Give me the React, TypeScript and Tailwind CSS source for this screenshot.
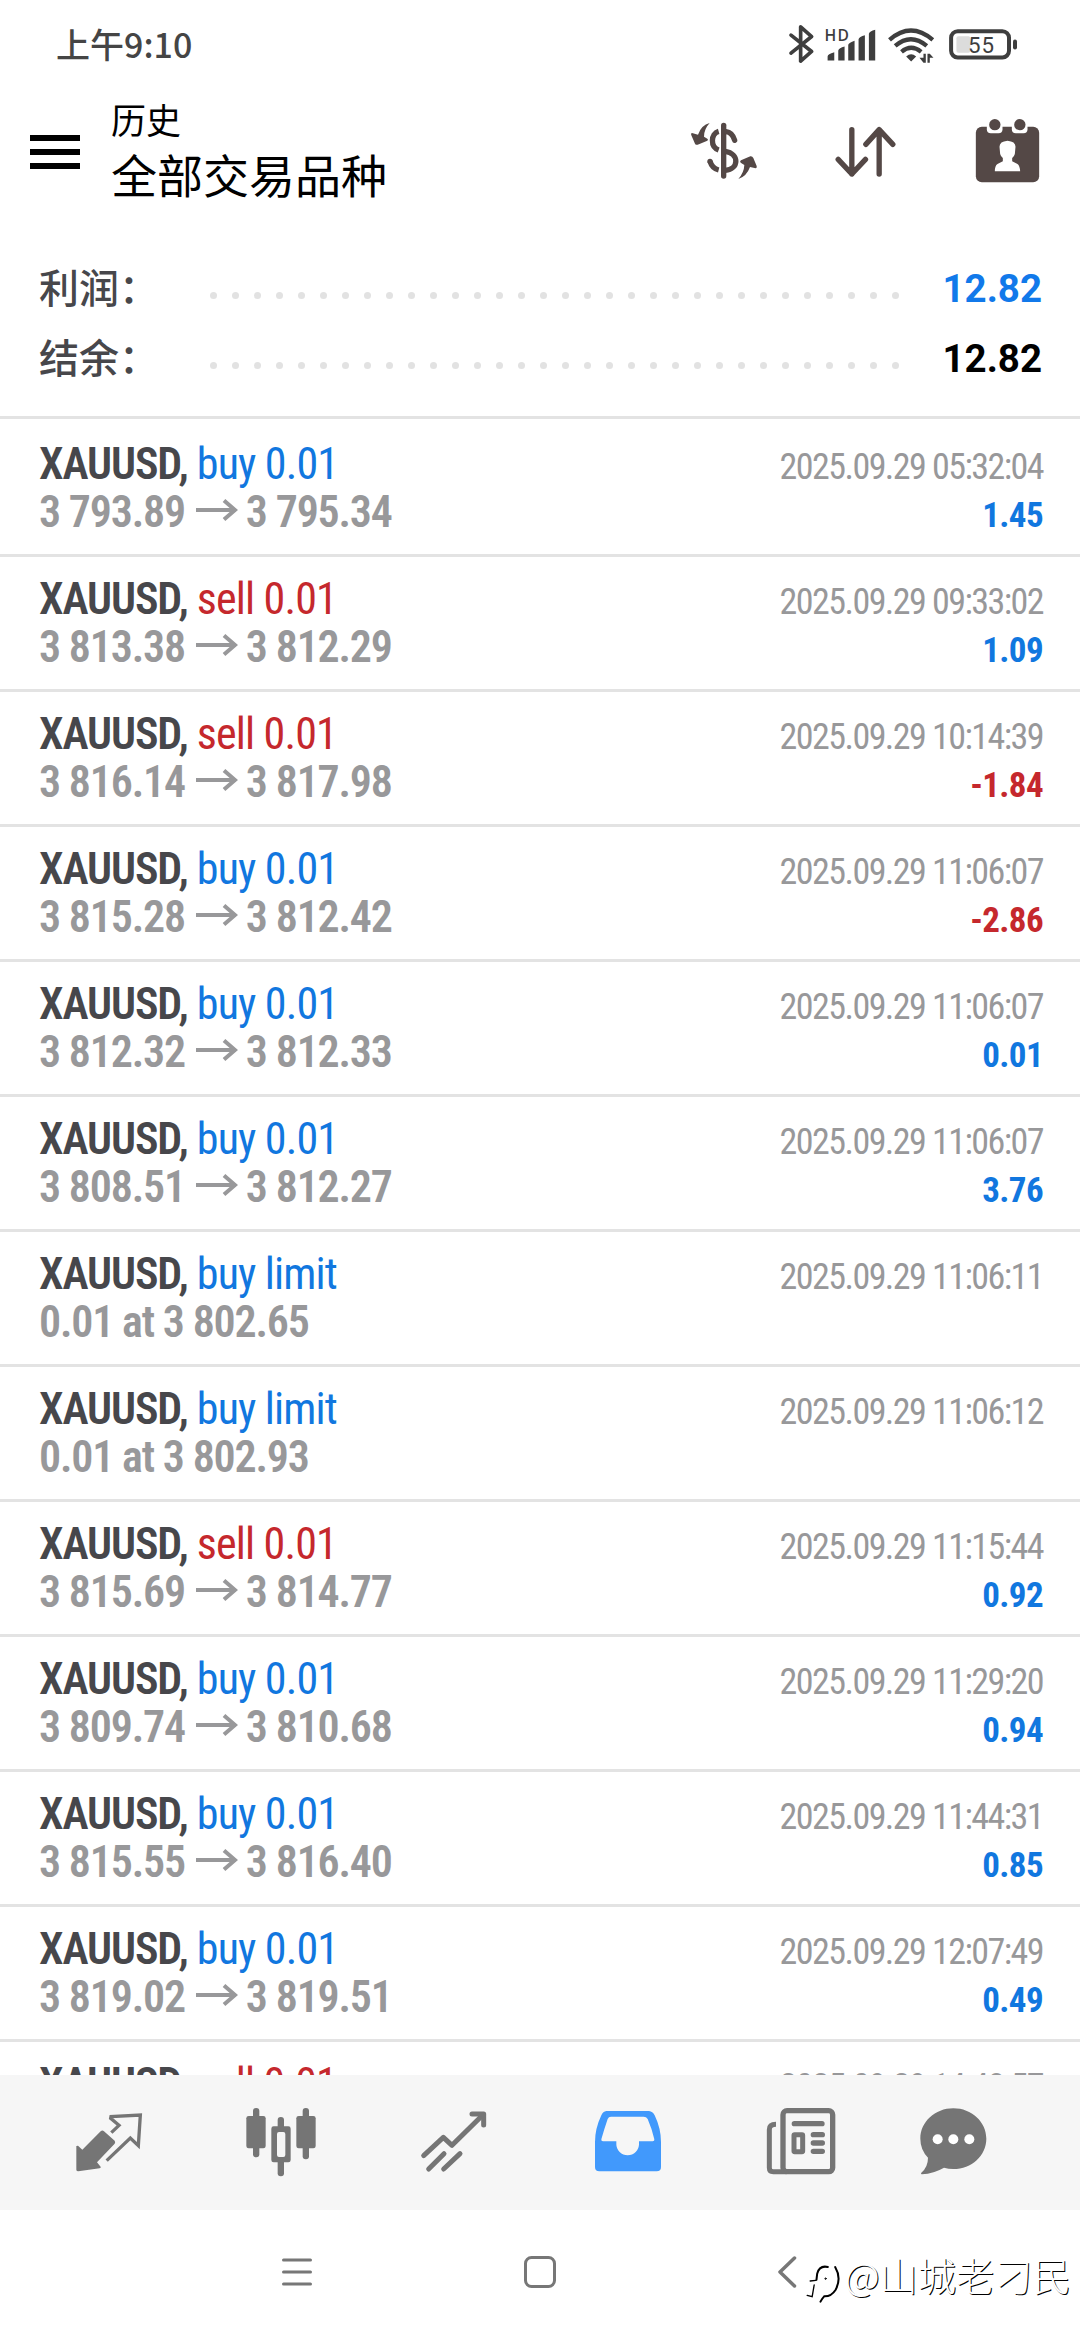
import clsx from "clsx";

type Deal = {
  type: "buy" | "sell";
  label: string;
  time: string;
  from?: string;
  to?: string;
  note?: string;
  profit?: string;
};

const deals: Deal[] = [
  { type: "buy", label: "buy 0.01", time: "2025.09.29 05:32:04", from: "3 793.89", to: "3 795.34", profit: "1.45" },
  { type: "sell", label: "sell 0.01", time: "2025.09.29 09:33:02", from: "3 813.38", to: "3 812.29", profit: "1.09" },
  { type: "sell", label: "sell 0.01", time: "2025.09.29 10:14:39", from: "3 816.14", to: "3 817.98", profit: "-1.84" },
  { type: "buy", label: "buy 0.01", time: "2025.09.29 11:06:07", from: "3 815.28", to: "3 812.42", profit: "-2.86" },
  { type: "buy", label: "buy 0.01", time: "2025.09.29 11:06:07", from: "3 812.32", to: "3 812.33", profit: "0.01" },
  { type: "buy", label: "buy 0.01", time: "2025.09.29 11:06:07", from: "3 808.51", to: "3 812.27", profit: "3.76" },
  { type: "buy", label: "buy limit", time: "2025.09.29 11:06:11", note: "0.01 at 3 802.65" },
  { type: "buy", label: "buy limit", time: "2025.09.29 11:06:12", note: "0.01 at 3 802.93" },
  { type: "sell", label: "sell 0.01", time: "2025.09.29 11:15:44", from: "3 815.69", to: "3 814.77", profit: "0.92" },
  { type: "buy", label: "buy 0.01", time: "2025.09.29 11:29:20", from: "3 809.74", to: "3 810.68", profit: "0.94" },
  { type: "buy", label: "buy 0.01", time: "2025.09.29 11:44:31", from: "3 815.55", to: "3 816.40", profit: "0.85" },
  { type: "buy", label: "buy 0.01", time: "2025.09.29 12:07:49", from: "3 819.02", to: "3 819.51", profit: "0.49" },
  { type: "sell", label: "sell 0.01", time: "2025.09.29 14:48:57" },
];

function StatusBar() {
  return (
    <div className="flex h-[88px] items-center justify-between pl-14 pr-[60px] text-[#3e3e3e]">
      <span className="font-['Noto_Sans_CJK_SC',sans-serif] text-[34px] font-medium leading-[46px] text-[#454545]">
        上午9:10
      </span>
      <svg viewBox="440 62 700 140" className="h-[47px] w-[233px]" fill="currentColor">
        <path
          d="M452 104 L514 153 L481 182 V79 L514 108 L452 158"
          fill="none"
          stroke="currentColor"
          strokeWidth="11"
          strokeLinecap="round"
          strokeLinejoin="round"
        />
        <text x="553" y="120" fontSize="47" fontWeight="600" className="font-['Open_Sans',sans-serif]" textLength="73">
          HD
        </text>
        <path d="M562 180 V168 Q562 160 582 155 V180 Z M594 180 V150 Q596 143 613 138 V180 Z M624 180 V133 Q626 127 643 121 V180 Z M655 180 V116 Q657 109 674 104 V180 Z M686 180 V100 Q688 92 705 88 V180 Z" />
        <g fill="none" stroke="currentColor" strokeWidth="13">
          <path d="M748 118 Q812 62 878 118" />
          <path d="M765 136 Q812 96 860 136" />
          <path d="M784 154 Q813 130 843 154" />
        </g>
        <path d="M798 168 Q813 155 828 168 L813 183 Z M850 160 h7 v27 h-7 L838 172 h12 Z M862 187 V160 h7 L880 172 h-11 V187 Z" />
        <rect x="949" y="107" width="42" height="50" rx="6" fill="#dcdcdc" />
        <rect x="933" y="92" width="174" height="79" rx="20" fill="none" stroke="currentColor" strokeWidth="12" />
        <rect x="1119" y="117" width="12" height="30" rx="6" />
        <text x="984" y="157" fontSize="67" textLength="78" className="font-['Roboto',sans-serif]">
          55
        </text>
      </svg>
    </div>
  );
}

function Header() {
  return (
    <header className="flex h-[142px] items-start pl-[30px] text-black">
      <div className="mt-[47px] flex w-[50px] flex-col gap-2">
        <div className="h-1.5 bg-black" />
        <div className="h-1.5 bg-black" />
        <div className="h-1.5 bg-black" />
      </div>
      <div className="ml-[31px] flex flex-col font-['Noto_Sans_CJK_SC',sans-serif]">
        <span className="mt-[7px] text-[35px] leading-[48px]">历史</span>
        <span className="mt-[-2px] text-[46px] leading-[64px]">全部交易品种</span>
      </div>
      <div className="ml-auto mr-[39px] mt-[29px] flex items-start text-[#544846]">
        <svg viewBox="24 54 204 204" className="size-[68px]" fill="currentColor">
          <g fill="none" stroke="currentColor" strokeWidth="16">
            <path d="M125 79 V231" strokeLinecap="round" />
            <path d="M132 98 Q151 100 158 124" strokeLinecap="round" />
            <path d="M110 97 C86 104 84 144 110 153" />
            <path d="M130 157 C172 164 172 210 130 214" />
            <path d="M84 187 Q90 208 110 213" strokeLinecap="butt" />
          </g>
          <circle cx="84" cy="187" r="8" />
          <path d="M83 72 Q58 78 48 107 L30 102 Q25 103 28 109 L39 134 Q42 139 47 137 L76 125 Q80 122 76 119 L66 113 Q66 90 83 72 Z" />
          <path d="M169 240 Q194 232 204 204 L221 208 Q226 207 224 201 L214 177 Q211 171 205 172 L177 184 Q172 187 176 191 L187 198 Q186 221 169 240 Z" />
        </svg>
        <svg
          viewBox="575 351 200 204"
          className="ml-[74px] h-[68px] w-[67px]"
          fill="none"
          stroke="currentColor"
          strokeWidth="16"
          strokeLinecap="round"
          strokeLinejoin="round"
        >
          <path d="M634 389 V522 M593 478 L634 522 L675 478" />
          <path d="M716 522 V389 M676 433 L716 389 L757 433" />
        </svg>
        <svg viewBox="1000 351 200 204" className="ml-[75px] h-[68px] w-[67px]" fill="currentColor">
          <rect x="1005" y="380" width="190" height="167" rx="18" />
          <rect x="1038" y="360" width="47" height="40" rx="12" fill="#fff" />
          <rect x="1113" y="360" width="47" height="40" rx="12" fill="#fff" />
          <circle cx="1062" cy="374" r="17" />
          <circle cx="1137" cy="374" r="17" />
          <path
            d="M1076 440 Q1076 424 1100 422 Q1124 424 1124 440 L1122 462 Q1120 470 1114 474 V484 L1130 492 Q1137 497 1138 514 H1062 Q1062 497 1070 492 L1086 484 V474 Q1080 470 1078 462 Z"
            fill="#fff"
          />
        </svg>
      </div>
    </header>
  );
}

function SummaryRow({ label, value, blue }: { label: string; value: string; blue?: boolean }) {
  return (
    <div className="flex h-[70px] items-center pl-[39px] pr-[38px]">
      <span className="mb-1 w-[171px] font-['Noto_Sans_CJK_SC',sans-serif] text-[40px] font-medium leading-[60px] text-[#47474b]">
        {label}
      </span>
      <div className="mt-[15px] flex gap-[15px]">
        {Array.from({ length: 32 }, (_, i) => (
          <i key={i} className="size-[7px] rounded-full bg-[#e2e2e2]" />
        ))}
      </div>
      <span
        className={clsx(
          "ml-auto mt-0.5 font-['Roboto',sans-serif] text-[38.5px] font-bold leading-[60px]",
          blue ? "text-[#1179ea]" : "text-black"
        )}
      >
        {value}
      </span>
    </div>
  );
}

// the empty strip under the arrow lifts it off the text baseline
function Arrow() {
  return (
    <svg
      viewBox="0 0 42 28"
      className="ml-[11px] mr-2 h-7 w-[42px]"
      fill="none"
      stroke="currentColor"
      strokeWidth="4"
    >
      <path d="M0 11 H39 M28 1.500 L39 11 L28 20.500" />
    </svg>
  );
}

function DealRow({ deal }: { deal: Deal }) {
  return (
    <li className="h-[135px] shrink-0 border-b-[3px] border-[#e3e3e3] pl-[39px] pr-[37px] pt-[18px] font-['Roboto_Condensed',sans-serif]">
      <div className="flex h-12 items-baseline justify-between leading-[48px]">
        <div className="flex items-baseline text-[44px]">
          <span className="font-[650] tracking-[-1.1px] text-[#47474b]">XAUUSD,</span>
          <span
            className={clsx(
              "ml-[9px] tracking-[-0.85px]",
              deal.type === "buy" ? "text-[#1177df]" : "text-[#c5282d]"
            )}
          >
            {deal.label}
          </span>
        </div>
        <span className="text-[36px] tracking-[-1.55px] text-[#98989a]">{deal.time}</span>
      </div>
      <div className="flex h-12 items-baseline justify-between leading-[48px]">
        <div className="flex items-baseline text-[44px] font-[650] tracking-[-1.2px] text-[#98989a]">
          {deal.note}
          {deal.from && (
            <>
              <span>{deal.from}</span>
              <Arrow />
              <span>{deal.to}</span>
            </>
          )}
        </div>
        {deal.profit && (
          <span
            className={clsx(
              "text-[35px] font-bold tracking-[-0.6px]",
              deal.profit.startsWith("-") ? "text-[#c5282d]" : "text-[#1177df]"
            )}
          >
            {deal.profit}
          </span>
        )}
      </div>
    </li>
  );
}

function TabBar() {
  return (
    <nav className="flex h-[135px] items-center bg-[#f6f6f6] pb-0.5 text-[#757575]">
      <svg viewBox="41 50 210 210" className="ml-[74px] size-[70px]" fill="currentColor">
        <path d="M121 123 Q126 118 131 123 L163 151 Q166 156 163 160 L110 216 L122 231 L118 234 L54 243 Q48 243 48 238 V167 L53 166 L66 178 Z" />
        <path
          d="M153 127 L176 105 L151 84 L152 79 L240 74 L234 166 L210 143 L139 211"
          fill="none"
          stroke="currentColor"
          strokeWidth="10"
        />
      </svg>
      <svg viewBox="558 50 210 210" className="ml-[102px] size-[70px]" fill="currentColor">
        <rect x="579" y="53" width="19" height="148" rx="9" />
        <rect x="559" y="77" width="58" height="97" rx="7" />
        <rect x="728" y="53" width="19" height="154" rx="9" />
        <rect x="709" y="77" width="58" height="97" rx="7" />
        <rect x="653" y="80" width="19" height="40" rx="9" />
        <rect x="653" y="205" width="19" height="53" rx="9" />
        <path d="M641 108 h44 q7 0 7 7 v94 q0 7 -7 7 h-44 q-7 0 -7 -7 v-94 q0 -7 7 -7 Z M657 125 q-6 0 -6 6 v63 q0 6 6 6 h13 q6 0 6 -6 v-63 q0 -6 -6 -6 Z" fillRule="evenodd" />
      </svg>
      <svg
        viewBox="58 50 210 210"
        className="ml-[103px] size-[70px]"
        fill="none"
        stroke="currentColor"
        strokeWidth="15"
        strokeLinecap="round"
        strokeLinejoin="round"
      >
        <path d="M72 196 L131 141 L157 165 L250 73" />
        <path d="M217 71 H252 V104" />
        <path d="M87 236 L133 190 M132 236 L181 190" />
      </svg>
      <svg viewBox="578 50 210 210" className="ml-[104px] size-[70px]" fill="#4199fc">
        <path
          d="M618 62 H746 Q757 63 763 75 Q782 115 782 155 V230 Q782 243 769 243 H597 Q584 243 584 230 V155 Q584 115 603 75 Q608 63 618 62 Z M632 79 Q625 79 622 86 Q612 115 603 147 Q602 153 608 153 H648 V162 A34 33 0 0 0 716 162 V153 H757 Q763 153 762 147 Q754 113 742 86 Q738 79 730 79 Z"
          fillRule="evenodd"
        />
      </svg>
      <svg viewBox="48 50 210 210" className="ml-[103px] size-[70px]" fill="none" stroke="currentColor">
        <rect x="99" y="61" width="149" height="183" rx="12" strokeWidth="16" />
        <path d="M78 102 Q58 102 58 118 V232 Q58 244 70 244 H110" strokeWidth="15" />
        <path d="M98 230 V246 H112 Z" fill="currentColor" strokeWidth="6" />
        <path d="M133 100 H216 M190 133 H217 M190 158 H217 M190 183 H217" strokeWidth="16" strokeLinecap="round" />
        <rect x="132" y="133" width="26" height="51" rx="2" strokeWidth="15" strokeLinejoin="round" />
      </svg>
      <svg viewBox="503 50 210 210" className="ml-[82px] size-[70px]" fill="currentColor">
        <path d="M609 54 C664 54 708 95 708 145 C708 195 664 236 609 236 Q594 236 581 232 Q550 250 515 252 Q510 252 513 247 Q533 230 533 202 Q510 178 510 145 C510 95 554 54 609 54 Z" />
        <circle cx="562" cy="147" r="15" fill="#fff" />
        <circle cx="609" cy="147" r="15" fill="#fff" />
        <circle cx="657" cy="147" r="15" fill="#fff" />
      </svg>
    </nav>
  );
}

function SystemBar() {
  return (
    <div className="relative flex h-[130px] items-start pt-[46px] text-[#777]">
      <svg viewBox="0 0 32 32" className="ml-[281px] size-8" stroke="currentColor" strokeWidth="3" strokeLinecap="round">
        <path d="M2.500 4 H29.500 M2.500 16 H29.500 M2.500 28 H29.500" />
      </svg>
      <svg viewBox="0 0 32 32" className="ml-[211px] size-8" fill="none" stroke="currentColor" strokeWidth="3">
        <rect x="1.500" y="1.500" width="29" height="29" rx="6" />
      </svg>
      <svg
        viewBox="0 0 20 32"
        className="ml-[221px] h-8 w-5"
        fill="none"
        stroke="currentColor"
        strokeWidth="3.500"
        strokeLinecap="round"
        strokeLinejoin="round"
      >
        <path d="M17.500 2 L3 16 L17.500 30" />
      </svg>
      <div className="absolute right-[9px] top-[37px] flex items-start">
        <svg viewBox="138 75 104 120" className="mr-1 mt-[17px] h-10 w-[35px]" fill="none" stroke="#000" strokeLinecap="round">
          <path d="M203 84 Q178 78 171 104 L169 122" strokeWidth="6" />
          <path d="M150 126 L167 124 M141 169 L156 173 L162 138" strokeWidth="4" />
          <path d="M225 84 Q245 118 226 153 Q213 173 192 172 Q186 178 181 188" strokeWidth="6" />
          <circle cx="196" cy="119" r="2" strokeWidth="3" />
        </svg>
        <span className="font-['Noto_Sans_CJK_SC',sans-serif] text-[38.3px] font-light leading-[56px] text-white [text-shadow:1px_1px_0_#000]">
          @山城老刁民
        </span>
      </div>
    </div>
  );
}

export default function App() {
  return (
    <div className="flex h-[2340px] w-[1080px] flex-col overflow-hidden bg-white">
      <StatusBar />
      <Header />
      <section className="flex h-[189px] flex-col border-b-[3px] border-[#e3e3e3] pt-[23px]">
        <SummaryRow label="利润：" value="12.82" blue />
        <SummaryRow label="结余：" value="12.82" />
      </section>
      <ul className="flex h-[1656px] flex-col overflow-hidden pt-[3px]">
        {deals.map((deal, i) => (
          <DealRow key={i} deal={deal} />
        ))}
      </ul>
      <TabBar />
      <SystemBar />
    </div>
  );
}
